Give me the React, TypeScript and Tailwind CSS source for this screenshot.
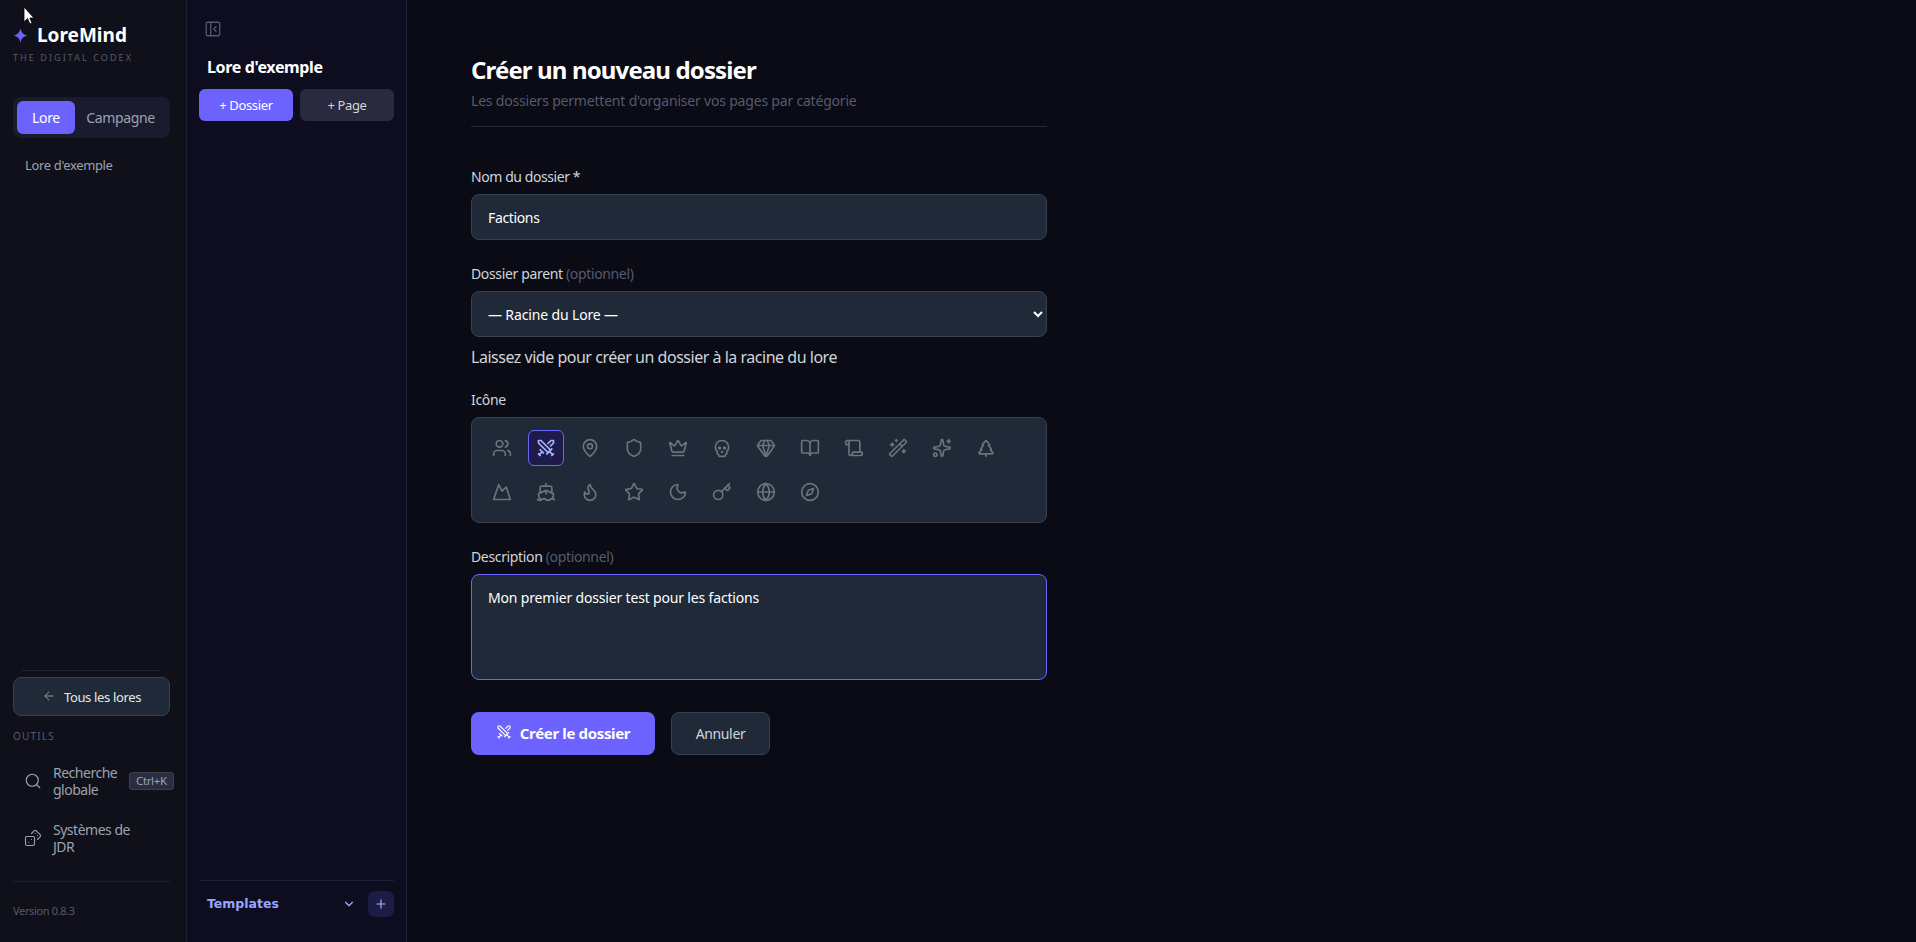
import {
  ArrowLeft,
  BookOpen,
  ChevronDown,
  Compass,
  Crown,
  Dices,
  Flame,
  Gem,
  Globe,
  Key,
  MapPin,
  Moon,
  Mountain,
  PanelLeftClose,
  Plus,
  Scroll,
  Search,
  Shield,
  Ship,
  Skull,
  Sparkles,
  Star,
  Swords,
  TreePine,
  Users,
  WandSparkles,
} from 'lucide-react';

const ICONS = [
  Users, Swords, MapPin, Shield, Crown, Skull, Gem, BookOpen, Scroll, WandSparkles, Sparkles, TreePine,
  Mountain, Ship, Flame, Star, Moon, Key, Globe, Compass,
];

const fieldClass =
  'w-full rounded-lg border border-[#374151] bg-[#1f2937] px-4 text-sm text-white outline-none';

function Sidebar() {
  return (
    <aside className="flex w-[187px] shrink-0 flex-col border-r border-[#1f2037] bg-[#0f1019] pr-[16px] pl-[13px]">
      <div className="mt-[23px] flex items-center gap-[9px]">
        <svg width="15" height="15" viewBox="0 0 24 24" className="text-[#6c63ff]" fill="currentColor">
          <path d="M12 0 C13 7 17 11 24 12 C17 13 13 17 12 24 C11 17 7 13 0 12 C7 11 11 7 12 0 Z" />
        </svg>
        <span className="text-[19px] leading-[24px] font-bold tracking-normal text-white">LoreMind</span>
      </div>
      <p className="mt-[4px] text-[9px] leading-[14px] tracking-[0.23em] text-[#565a6e]">THE DIGITAL CODEX</p>

      <div className="mt-[32px] flex h-[41px] items-center rounded-lg bg-[#1a1b2e] px-1">
        <div className="flex h-[33px] w-[58px] items-center justify-center rounded-md bg-[#6c63ff] text-sm text-white">
          Lore
        </div>
        <div className="flex flex-1 items-center justify-center text-sm text-[#9ca3af]">Campagne</div>
      </div>

      <p className="mt-[18px] pl-3 text-[13px] leading-[18px] text-[#9ca3af]">Lore d'exemple</p>

      <div className="mx-[9px] mt-auto border-t border-[#1f2937]" />
      <button className="mt-[6px] flex h-[39px] items-center justify-center gap-2 rounded-lg border border-[#374151] bg-[#1f2937] pt-[2px] text-[13px] text-[#e5e7eb]">
        <ArrowLeft size={14} strokeWidth={1.5} className="mb-1 text-[#9ca3af]" />
        Tous les lores
      </button>
      <p className="mt-[13px] text-[10px] leading-[14px] tracking-[0.12em] text-[#565a6e]">OUTILS</p>

      <div className="mt-[21px] flex items-center pl-[11px]">
        <Search size={18} strokeWidth={1.5} className="shrink-0 text-[#9ca3af]" />
        <span className="ml-[11px] w-[76px] shrink-0 text-sm leading-[17px] tracking-[-0.035em] text-[#9ca3af]">
          Recherche globale
        </span>
        <span className="shrink-0 rounded-[3px] border border-[#374151] bg-[#2a2d40] px-[6px] text-[11.5px] leading-[16px] text-[#9ca3af]">
          Ctrl+K
        </span>
      </div>
      <div className="mt-[23px] mb-[1px] flex items-center pl-[11px]">
        <Dices size={18} strokeWidth={1.5} className="shrink-0 text-[#9ca3af]" />
        <span className="ml-[11px] w-[84px] shrink-0 text-sm leading-[17px] tracking-[-0.035em] text-[#9ca3af]">
          Systèmes de JDR
        </span>
      </div>

      <div className="mt-[25px] border-t border-[#1f2037]" />
      <p className="mt-[22px] mb-[24px] text-[11px] leading-[14px] text-[#565a6e]">Version 0.8.3</p>
    </aside>
  );
}

function LorePanel() {
  return (
    <aside className="flex w-[220px] shrink-0 flex-col border-r border-[#1f2037] bg-[#0d0d1f] px-3">
      <PanelLeftClose size={18} strokeWidth={1.75} className="mt-[20px] ml-[5px] text-[#565a6e]" />
      <h2 className="mt-[19px] ml-[8px] text-base leading-[20px] font-bold text-white">Lore d'exemple</h2>
      <div className="mt-[12px] flex gap-[7px]">
        <button className="h-[32px] flex-1 rounded-md bg-[#6c63ff] pt-[1px] text-[13px] text-white">+ Dossier</button>
        <button className="h-[32px] flex-1 rounded-md bg-[#2a2a3e] pt-[1px] text-[13px] text-[#d1d5db]">+ Page</button>
      </div>

      <div className="mt-auto border-t border-[#1f2037]" />
      <div className="mt-[10px] mb-[25px] flex items-center">
        <span className="ml-2 flex-1 pt-[1px] font-['DejaVu_Sans'] text-[12.5px] font-bold tracking-normal text-[#9aa5ff]">
          Templates
        </span>
        <ChevronDown size={14} className="mr-[12px] text-[#a5b4fc]" />
        <span className="flex h-[26px] w-[26px] items-center justify-center rounded-md bg-[#1c1c44] text-[#a5b4fc]">
          <Plus size={14} />
        </span>
      </div>
    </aside>
  );
}

function FolderForm() {
  return (
    <main className="flex-1 bg-[#0a0b14] pt-[54px] pl-[64px]">
      <div className="w-[576px]">
        <h1 className="text-2xl leading-[32px] font-bold tracking-[-0.036em] text-white">Créer un nouveau dossier</h1>
        <p className="mt-[5px] text-sm leading-[20px] tracking-[-0.014em] text-[#565a6e]">
          Les dossiers permettent d'organiser vos pages par catégorie
        </p>
        <div className="mt-[15px] border-t border-[#1f2937]" />

        <label className="mt-[40px] block text-sm leading-[20px] tracking-[-0.03em] text-[#d1d5db]">
          Nom du dossier *
        </label>
        <input defaultValue="Factions" className={`mt-[7px] h-[46px] ${fieldClass}`} />

        <label className="mt-[24px] block text-sm leading-[20px] text-[#d1d5db]">
          Dossier parent <span className="text-[#565a6e]">(optionnel)</span>
        </label>
        <select className={`mt-[7px] h-[46px] tracking-[-0.01em] ${fieldClass} pl-3`}>
          <option>— Racine du Lore —</option>
        </select>
        <p className="mt-[8px] text-base leading-[24px] tracking-[-0.03em] text-[#d1d5db]">
          Laissez vide pour créer un dossier à la racine du lore
        </p>

        <label className="mt-[21px] block text-sm leading-[20px] text-[#d1d5db]">Icône</label>
        <div className="mt-[7px] grid grid-cols-[repeat(12,36px)] gap-2 rounded-lg border border-[#374151] bg-[#1f2937] p-3">
          {ICONS.map((Icon, i) => (
            <div
              key={i}
              className={
                i === 1
                  ? 'flex h-9 w-9 items-center justify-center rounded-md border border-[#6c63ff] bg-[#1e1b4b] text-[#a5b4fc]'
                  : 'flex h-9 w-9 items-center justify-center text-[#6b7280]'
              }
            >
              <Icon size={20} className="-mt-[1px]" />
            </div>
          ))}
        </div>

        <label className="mt-[24px] block text-sm leading-[20px] text-[#d1d5db]">
          Description <span className="text-[#565a6e]">(optionnel)</span>
        </label>
        <textarea
          defaultValue="Mon premier dossier test pour les factions"
          className="mt-[7px] block h-[106px] w-full resize-none rounded-lg border border-[#6c63ff] bg-[#1f2937] px-4 pt-[13px] text-sm leading-[20px] tracking-[-0.012em] text-white outline-none"
        />

        <div className="mt-[32px] flex gap-4">
          <button className="flex h-[43px] w-[184px] items-center justify-center gap-2 rounded-lg bg-[#6c63ff] text-[15px] font-bold text-white">
            <Swords size={16} strokeWidth={1.75} className="mb-1" />
            Créer le dossier
          </button>
          <button className="h-[43px] w-[99px] rounded-lg border border-[#374151] bg-[#1f2937] text-sm text-[#d1d5db]">
            Annuler
          </button>
        </div>
      </div>
    </main>
  );
}

export default function App() {
  return (
    <div className="relative flex h-screen overflow-hidden font-['Noto_Sans',sans-serif] tracking-[-0.022em]">
      <Sidebar />
      <LorePanel />
      <FolderForm />
      {/* mouse cursor caught in the screenshot */}
      <svg className="absolute top-[7px] left-[23px]" width="12" height="18" viewBox="0 0 12 18">
        <path d="M1 0 L1 15 L4.5 11.5 L7 17 L9 16 L6.8 11 L11 11 Z" fill="#fff" stroke="#000" strokeWidth="0.8" />
      </svg>
    </div>
  );
}
